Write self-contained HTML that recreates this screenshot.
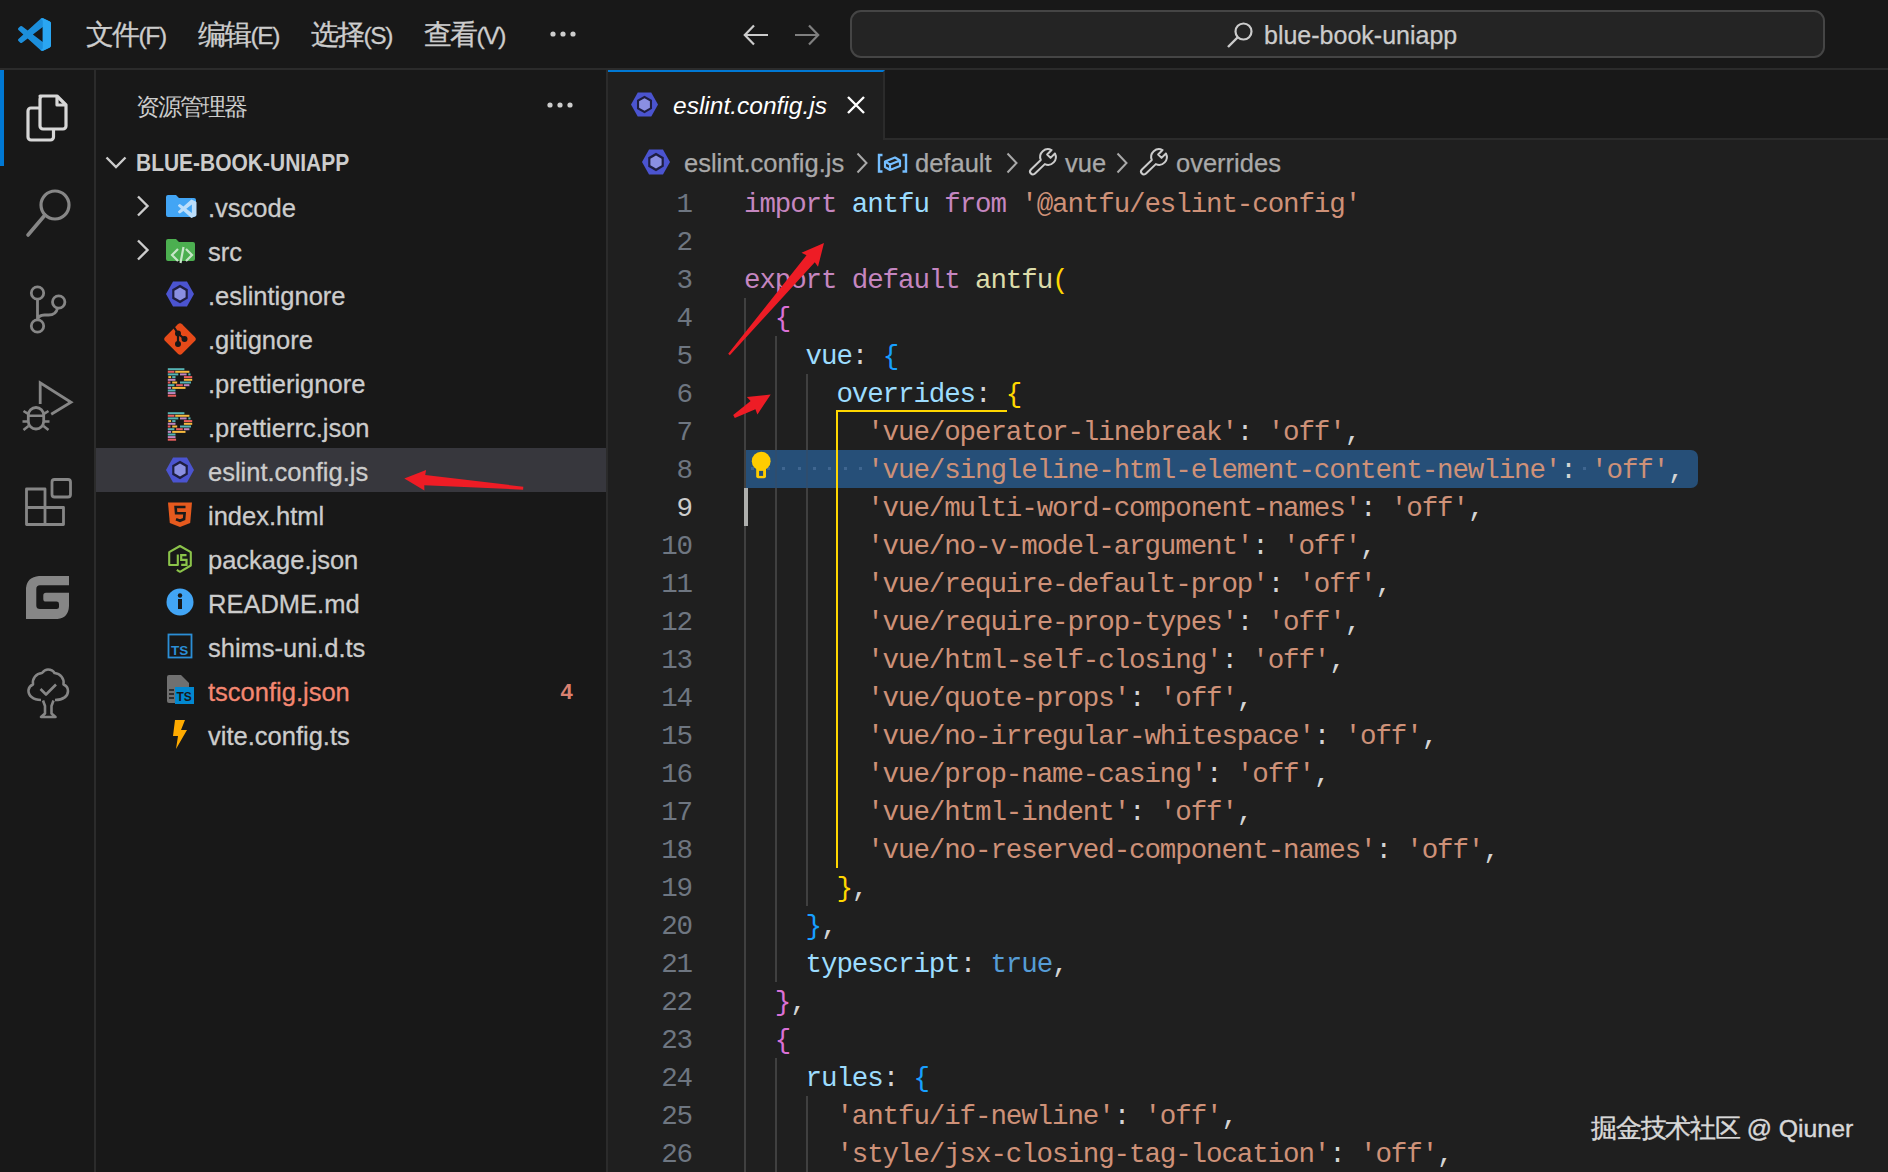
<!DOCTYPE html><html><head><meta charset="utf-8"><style>
*{margin:0;padding:0;box-sizing:border-box}
html,body{width:1888px;height:1172px;overflow:hidden;background:#1f1f1f}
body{position:relative;font-family:"Liberation Sans",sans-serif;color:#cccccc}
.a{position:absolute}
svg{position:absolute;overflow:visible}
#title{left:0;top:0;width:1888px;height:70px;background:#181818;border-bottom:2px solid #2b2b2b}
#act{left:0;top:70px;width:96px;height:1102px;background:#181818;border-right:2px solid #2b2b2b}
#side{left:96px;top:70px;width:512px;height:1102px;background:#181818;border-right:2px solid #2b2b2b}
#tabs{left:608px;top:70px;width:1280px;height:70px;background:#181818;border-bottom:2px solid #2b2b2b}
#tab{left:608px;top:70px;width:277px;height:70px;background:#1f1f1f;border-top:2px solid #0078d4;border-right:2px solid #2b2b2b}
.menu{top:1px;height:68px;line-height:68px;font-size:24.5px;color:#cccccc;white-space:nowrap;-webkit-text-stroke:0.3px currentColor}
.row{left:96px;width:510px;height:44px}
.rt{position:absolute;left:112px;top:2px;height:44px;line-height:44px;font-size:25.5px;color:#cccccc;white-space:nowrap;-webkit-text-stroke:0.3px currentColor}
.ln{left:600px;width:92px;text-align:right;height:38px;line-height:38px;padding-top:2px;font-family:"Liberation Mono",monospace;font-size:27.5px;letter-spacing:-1.1px;color:#6e7681}
.cl{left:744px;height:38px;line-height:38px;padding-top:2px;font-family:"Liberation Mono",monospace;font-size:27.5px;letter-spacing:-1.102px;color:#d4d4d4;white-space:pre}
.k{color:#c586c0}.v{color:#9cdcfe}.f{color:#dcdcaa}.s{color:#ce9178}.b1{color:#ffd700}.b2{color:#da70d6}.b3{color:#179fff}.c{color:#569cd6}
.ig{width:2px;background:#404040}
.bc{top:141px;height:44px;line-height:44px;font-size:25.5px;color:#a9a9a9;white-space:nowrap;-webkit-text-stroke:0.25px currentColor}
</style></head><body>
<div id="title" class="a"></div><div id="act" class="a"></div><div id="side" class="a"></div><div id="tabs" class="a"></div><div id="tab" class="a"></div>
<svg style="left:18px;top:18px" width="33" height="33" viewBox="0 0 100 100"><path fill="#1c8fdc" d="M96.46 10.8L75.86.87a6.22 6.22 0 0 0-7.1 1.2L29.35 38.04 12.17 25.01a4.15 4.15 0 0 0-5.3.24L1.36 30.26a4.16 4.16 0 0 0 0 6.14L16.26 50 1.36 63.6a4.16 4.16 0 0 0 0 6.14l5.51 5a4.15 4.15 0 0 0 5.3.24l17.18-13.03 39.41 35.97a6.22 6.22 0 0 0 7.1 1.2l20.6-9.91A6.25 6.25 0 0 0 100 83.6V16.4a6.25 6.25 0 0 0-3.54-5.6zM75.02 72.7L45.11 50l29.91-22.7v45.4z"/><path fill="#2aa6f2" d="M68.5 2.2L75.86.87l20.6 9.93A6.25 6.25 0 0 1 100 16.4v67.2a6.25 6.25 0 0 1-3.54 5.6l-20.6 9.93-7.36-1.2 6.52-5.5V7.7z"/></svg>
<div class="a menu" style="left:86px"><span style="font-size:27.5px;letter-spacing:-1.7px">文件</span><span style="letter-spacing:-1.4px">(F)</span></div>
<div class="a menu" style="left:198px"><span style="font-size:27.5px;letter-spacing:-1.7px">编辑</span><span style="letter-spacing:-1.4px">(E)</span></div>
<div class="a menu" style="left:311px"><span style="font-size:27.5px;letter-spacing:-1.7px">选择</span><span style="letter-spacing:-1.4px">(S)</span></div>
<div class="a menu" style="left:424px"><span style="font-size:27.5px;letter-spacing:-1.7px">查看</span><span style="letter-spacing:-1.4px">(V)</span></div>
<svg style="left:549.5px;top:31px" width="26" height="6"><circle cx="3" cy="3" r="2.6" fill="#cccccc"/><circle cx="13" cy="3" r="2.6" fill="#cccccc"/><circle cx="23" cy="3" r="2.6" fill="#cccccc"/></svg>
<svg style="left:743px;top:24px" width="26" height="22" viewBox="0 0 26 22"><path d="M11 1.5L1.8 11 11 20.5M2 11H25" fill="none" stroke="#cccccc" stroke-width="2.2"/></svg>
<svg style="left:794px;top:24px" width="26" height="22" viewBox="0 0 26 22"><path d="M15 1.5L24.2 11 15 20.5M24 11H1" fill="none" stroke="#7f7f7f" stroke-width="2.2"/></svg>
<div class="a" style="left:850px;top:10px;width:975px;height:48px;border-radius:11px;border:2px solid #454545;background:#242424"></div>
<svg style="left:1226px;top:21px" width="28" height="28" viewBox="0 0 28 28"><circle cx="17.5" cy="10.5" r="8" fill="none" stroke="#cccccc" stroke-width="2.2"/><path d="M12 16L2 26" stroke="#cccccc" stroke-width="2.4"/></svg>
<div class="a" style="left:1264px;top:12px;height:46px;line-height:46px;font-size:25px;color:#cccccc;-webkit-text-stroke:0.25px #cccccc">blue-book-uniapp</div>
<div class="a" style="left:0;top:70px;width:4px;height:96px;background:#0078d4"></div>
<svg style="left:24px;top:92px" width="48" height="52" viewBox="0 0 48 52"><path d="M16 4h17l9 9v21a3 3 0 0 1-3 3H19a3 3 0 0 1-3-3V7a3 3 0 0 1 3-3z" fill="none" stroke="#d7d7d7" stroke-width="3.2" stroke-linejoin="round"/><path d="M33 4v9h9" fill="none" stroke="#d7d7d7" stroke-width="3.2" stroke-linejoin="round"/><path d="M16 16h-9a3 3 0 0 0-3 3v26a3 3 0 0 0 3 3h19.5a3 3 0 0 0 3-3v-9" fill="none" stroke="#d7d7d7" stroke-width="3.2" stroke-linejoin="round"/></svg>
<svg style="left:24px;top:188px" width="50" height="52" viewBox="0 0 50 52"><circle cx="31" cy="17" r="14" fill="none" stroke="#868686" stroke-width="3.2"/><path d="M21 27L4 47" stroke="#868686" stroke-width="3.6" stroke-linecap="round"/></svg>
<svg style="left:26px;top:284px" width="44" height="54" viewBox="0 0 44 54"><circle cx="11.5" cy="9" r="6.2" fill="none" stroke="#868686" stroke-width="2.8"/><circle cx="11.5" cy="42" r="6.2" fill="none" stroke="#868686" stroke-width="2.8"/><circle cx="32.7" cy="18" r="6.2" fill="none" stroke="#868686" stroke-width="2.8"/><path d="M11.5 15.2v20.6M31.5 24.2c-1 5-4 6.8-9 6.8h-4c-4 0-6.5 1.5-6.8 4.8" fill="none" stroke="#868686" stroke-width="2.8"/></svg>
<svg style="left:22px;top:380px" width="52" height="54" viewBox="0 0 52 54"><path d="M18.2 24V2.8L49 22.2 29.2 34.2" fill="none" stroke="#868686" stroke-width="2.8" stroke-linejoin="miter"/><rect x="6.3" y="27.5" width="15.4" height="21.5" rx="7.7" fill="none" stroke="#868686" stroke-width="2.8"/><path d="M6.5 35.7h15M1.5 31l5 3.2M26.5 31l-5 3.2M0.5 41.5h6M21.5 41.5h6M1.5 50l5-4M26.5 50l-5-4" fill="none" stroke="#868686" stroke-width="2.6"/></svg>
<svg style="left:22px;top:476px" width="52" height="52" viewBox="0 0 52 52"><path d="M4.5 13h18.5v18.5h18.5v17H4.5z M4.5 31.5h18.5 M23 31.5v17" fill="none" stroke="#868686" stroke-width="2.8" stroke-linejoin="round"/><rect x="30" y="3.5" width="18.5" height="17.5" rx="2.5" fill="none" stroke="#868686" stroke-width="2.8"/></svg>
<svg style="left:26px;top:576px" width="44" height="44" viewBox="0 0 44 44"><path d="M0 12Q1 1 13 0H43V9.3H14Q10.3 9.3 10.3 13V29.5Q10.3 33 14 33H30.5Q33 33 33 30.5V28Q33 25.6 30.5 25.6H20Q17.3 25.6 17.3 23V19.5Q17.3 16.7 20 16.7H43V30Q42.5 42 31.5 43H0Z" fill="#868686"/></svg>
<svg style="left:25px;top:668px" width="46" height="52" viewBox="0 0 46 52"><path d="M16 32C8 32 3 27.5 3.5 22C4 19 5.5 17.5 8 16.5C7 10.5 11 5.5 17 5C19 2.5 21 1.5 23 1.5C25.5 1.5 28 2.5 29.5 5C35.5 5.5 39.5 10.5 38.5 16.5C41 17.5 43 19.5 43 23C43 28 38.5 32 30 32" fill="none" stroke="#868686" stroke-width="2.6" stroke-linejoin="round"/><path d="M18 32.5L20 38V45.5L16 49H30.5L26.5 45.5V38L28.5 32.5M15.5 21l5.5 5.5 10-10" fill="none" stroke="#868686" stroke-width="2.6" stroke-linejoin="round"/></svg>
<div class="a" style="left:135.5px;top:71.5px;height:70px;line-height:70px;font-size:24px;letter-spacing:-2px;color:#cccccc">资源管理器</div>
<svg style="left:547px;top:102px" width="26" height="6"><circle cx="3" cy="3" r="2.6" fill="#cccccc"/><circle cx="13" cy="3" r="2.6" fill="#cccccc"/><circle cx="23" cy="3" r="2.6" fill="#cccccc"/></svg>
<svg style="left:105px;top:156px" width="22" height="13" viewBox="0 0 22 13"><path d="M1.5 1.5L11 11 20.5 1.5" fill="none" stroke="#cccccc" stroke-width="2.4"/></svg>
<div class="a" style="left:136px;top:141px;height:44px;line-height:44px;font-size:23px;font-weight:bold;color:#cccccc;transform:scaleX(0.912);transform-origin:0 0">BLUE-BOOK-UNIAPP</div>
<div class="a row" style="top:184px;">
<div class="rt" style="color:#cccccc">.vscode</div>
</div>
<svg style="left:136px;top:195px" width="14" height="22" viewBox="0 0 14 22"><path d="M2 1.5L11.5 11 2 20.5" fill="none" stroke="#cccccc" stroke-width="2.4"/></svg>
<svg style="left:166px;top:195px" width="31" height="22" viewBox="0 0 31 22"><path d="M0 2a2 2 0 0 1 2-2h8l3 3h15a2 2 0 0 1 2 2v15a2 2 0 0 1-2 2H2a2 2 0 0 1-2-2z" fill="#42a5f5"/><g transform="translate(12,4.5) scale(0.185)"><path fill="#bbdefb" d="M96.46 10.8L75.86.87a6.22 6.22 0 0 0-7.1 1.2L29.35 38.04 12.17 25.01a4.15 4.15 0 0 0-5.3.24L1.36 30.26a4.16 4.16 0 0 0 0 6.14L16.26 50 1.36 63.6a4.16 4.16 0 0 0 0 6.14l5.51 5a4.15 4.15 0 0 0 5.3.24l17.18-13.03 39.41 35.97a6.22 6.22 0 0 0 7.1 1.2l20.6-9.91A6.25 6.25 0 0 0 100 83.6V16.4a6.25 6.25 0 0 0-3.54-5.6zM75.02 72.7L45.11 50l29.91-22.7v45.4z"/></g></svg>
<div class="a row" style="top:228px;">
<div class="rt" style="color:#cccccc">src</div>
</div>
<svg style="left:136px;top:239px" width="14" height="22" viewBox="0 0 14 22"><path d="M2 1.5L11.5 11 2 20.5" fill="none" stroke="#cccccc" stroke-width="2.4"/></svg>
<svg style="left:166px;top:239px" width="31" height="24" viewBox="0 0 31 24"><path d="M0 2a2 2 0 0 1 2-2h8l3 3h14a2 2 0 0 1 2 2v15a2 2 0 0 1-2 2H2a2 2 0 0 1-2-2z" fill="#4caf50"/><path d="M12 10l-6 6 6 6M20 10l6 6-6 6M17.5 8l-3 16" fill="none" stroke="#c8e6c9" stroke-width="2.2"/></svg>
<div class="a row" style="top:272px;">
<div class="rt" style="color:#cccccc">.eslintignore</div>
</div>
<svg style="left:166px;top:280px" width="28" height="28" viewBox="0 0 28 28"><path d="M7 1.5h14l7 12.5-7 12.5H7L0 14z" fill="#4b54d0"/><path d="M14 4.8l7.8 4.5v9.2L14 23.2l-7.8-4.5V9.3z" fill="#1e1e40"/><path d="M14 7.4l5.6 3.25v6.7L14 20.6l-5.6-3.25v-6.7z" fill="#8a8fe2"/></svg>
<div class="a row" style="top:316px;">
<div class="rt" style="color:#cccccc">.gitignore</div>
</div>
<svg style="left:164px;top:323px" width="32" height="30" viewBox="0 0 32 30"><path d="M13.9 1.2a3 3 0 0 1 4.2 0L30.8 13.9a3 3 0 0 1 0 4.2L18.1 30.8a3 3 0 0 1-4.2 0L1.2 18.1a3 3 0 0 1 0-4.2z" fill="#e64a19"/><circle cx="14" cy="10.5" r="3" fill="#181818"/><circle cx="14" cy="21" r="3" fill="#181818"/><circle cx="20.5" cy="16" r="3" fill="#181818"/><path d="M9.5 3.5l4.5 7M14 10.5v10.5M14 10.5l6.5 5.5" stroke="#181818" stroke-width="2.2"/></svg>
<div class="a row" style="top:360px;">
<div class="rt" style="color:#cccccc">.prettierignore</div>
</div>
<svg style="left:166px;top:368px" width="28" height="30" viewBox="0 0 28 30"><rect x="1.8" y="0.19999999999999996" width="16.6" height="2" fill="#56b3b4"/><rect x="1.8" y="2.8" width="6.6" height="2" fill="#ea5e5e"/><rect x="9.2" y="2.8" width="14.2" height="2" fill="#f7b93e"/><rect x="1.8" y="5.4" width="10.5" height="2" fill="#56b3b4"/><rect x="14" y="5.4" width="6.6" height="2" fill="#bf85bf"/><rect x="22.3" y="5.4" width="2.2" height="2" fill="#56b3b4"/><rect x="2.3" y="8.1" width="2.8" height="2" fill="#f7b93e"/><rect x="6.2" y="8.1" width="3.3" height="2" fill="#56b3b4"/><rect x="17.9" y="8.1" width="8.3" height="2" fill="#ea5e5e"/><rect x="1.8" y="10.8" width="7.7" height="2" fill="#bf85bf"/><rect x="17.9" y="10.8" width="8.3" height="2" fill="#f7b93e"/><rect x="1.8" y="13.5" width="2.7" height="2" fill="#ea5e5e"/><rect x="6.2" y="13.5" width="5.0" height="2" fill="#f7b93e"/><rect x="14" y="13.5" width="11.0" height="2" fill="#56b3b4"/><rect x="1.8" y="16.2" width="6.6" height="2" fill="#56b3b4"/><rect x="10.1" y="16.2" width="6.7" height="2" fill="#ea5e5e"/><rect x="17.9" y="16.2" width="5.5" height="2" fill="#bf85bf"/><rect x="1.8" y="18.9" width="3.3" height="2" fill="#bf85bf"/><rect x="6.2" y="18.9" width="13.3" height="2" fill="#f7b93e"/><rect x="1.8" y="21.5" width="7.7" height="2" fill="#56b3b4"/><rect x="1.8" y="24.1" width="7.7" height="2" fill="#bf85bf"/><rect x="1.8" y="26.7" width="8.3" height="2" fill="#ea5e5e"/></svg>
<div class="a row" style="top:404px;">
<div class="rt" style="color:#cccccc">.prettierrc.json</div>
</div>
<svg style="left:166px;top:412px" width="28" height="30" viewBox="0 0 28 30"><rect x="1.8" y="0.19999999999999996" width="16.6" height="2" fill="#56b3b4"/><rect x="1.8" y="2.8" width="6.6" height="2" fill="#ea5e5e"/><rect x="9.2" y="2.8" width="14.2" height="2" fill="#f7b93e"/><rect x="1.8" y="5.4" width="10.5" height="2" fill="#56b3b4"/><rect x="14" y="5.4" width="6.6" height="2" fill="#bf85bf"/><rect x="22.3" y="5.4" width="2.2" height="2" fill="#56b3b4"/><rect x="2.3" y="8.1" width="2.8" height="2" fill="#f7b93e"/><rect x="6.2" y="8.1" width="3.3" height="2" fill="#56b3b4"/><rect x="17.9" y="8.1" width="8.3" height="2" fill="#ea5e5e"/><rect x="1.8" y="10.8" width="7.7" height="2" fill="#bf85bf"/><rect x="17.9" y="10.8" width="8.3" height="2" fill="#f7b93e"/><rect x="1.8" y="13.5" width="2.7" height="2" fill="#ea5e5e"/><rect x="6.2" y="13.5" width="5.0" height="2" fill="#f7b93e"/><rect x="14" y="13.5" width="11.0" height="2" fill="#56b3b4"/><rect x="1.8" y="16.2" width="6.6" height="2" fill="#56b3b4"/><rect x="10.1" y="16.2" width="6.7" height="2" fill="#ea5e5e"/><rect x="17.9" y="16.2" width="5.5" height="2" fill="#bf85bf"/><rect x="1.8" y="18.9" width="3.3" height="2" fill="#bf85bf"/><rect x="6.2" y="18.9" width="13.3" height="2" fill="#f7b93e"/><rect x="1.8" y="21.5" width="7.7" height="2" fill="#56b3b4"/><rect x="1.8" y="24.1" width="7.7" height="2" fill="#bf85bf"/><rect x="1.8" y="26.7" width="8.3" height="2" fill="#ea5e5e"/></svg>
<div class="a row" style="top:448px;background:#37373d;">
<div class="rt" style="color:#cccccc">eslint.config.js</div>
</div>
<svg style="left:166px;top:456px" width="28" height="28" viewBox="0 0 28 28"><path d="M7 1.5h14l7 12.5-7 12.5H7L0 14z" fill="#4b54d0"/><path d="M14 4.8l7.8 4.5v9.2L14 23.2l-7.8-4.5V9.3z" fill="#1e1e40"/><path d="M14 7.4l5.6 3.25v6.7L14 20.6l-5.6-3.25v-6.7z" fill="#8a8fe2"/></svg>
<div class="a row" style="top:492px;">
<div class="rt" style="color:#cccccc">index.html</div>
</div>
<svg style="left:167px;top:501px" width="26" height="28" viewBox="0 0 26 28"><path d="M1 1.5h24l-1.8 20.5L13 26 2.8 22z" fill="#e65a1e"/><path d="M18.5 6H8.6l.5 6.3h8.5l-.5 5.7L13 19.8l-4-1.6" fill="none" stroke="#1a1a1a" stroke-width="2.6"/></svg>
<div class="a row" style="top:536px;">
<div class="rt" style="color:#cccccc">package.json</div>
</div>
<svg style="left:166px;top:544px" width="28" height="30" viewBox="0 0 28 30"><path d="M11.8 10.5v10.5H3.2V8.2L14 2l10.8 6.2v13.3L14 27.8l-3.2-1.9" fill="none" stroke="#8bc34a" stroke-width="2.1" stroke-linejoin="round"/><path d="M20.5 11.2h-5.3v4.6h5.3v5h-5.3" fill="none" stroke="#8bc34a" stroke-width="2.2"/></svg>
<div class="a row" style="top:580px;">
<div class="rt" style="color:#cccccc">README.md</div>
</div>
<svg style="left:166px;top:588px" width="28" height="28" viewBox="0 0 28 28"><circle cx="14" cy="14" r="13.5" fill="#42a5f5"/><rect x="12" y="11" width="4" height="10" fill="#181818"/><circle cx="14" cy="7.5" r="2.2" fill="#181818"/></svg>
<div class="a row" style="top:624px;">
<div class="rt" style="color:#cccccc">shims-uni.d.ts</div>
</div>
<svg style="left:166px;top:633px" width="28" height="28" viewBox="0 0 28 28"><rect x="2.5" y="1.5" width="23" height="23" fill="none" stroke="#2b8ed6" stroke-width="1.8"/><text x="5" y="21.5" font-family="Liberation Sans" font-weight="bold" font-size="13.5" fill="#2b8ed6">TS</text></svg>
<div class="a row" style="top:668px;">
<div class="rt" style="color:#f48771">tsconfig.json</div>
</div>
<svg style="left:166px;top:675px" width="30" height="30" viewBox="0 0 30 30"><path d="M1 2a2 2 0 0 1 2-2h12l8 8v20H3a2 2 0 0 1-2-2z" fill="#707070"/><path d="M3 15h5M3 19h5M3 23h5" stroke="#181818" stroke-width="1.6"/><rect x="9" y="12" width="19" height="17" fill="#0288d1"/><text x="10.5" y="26" font-family="Liberation Sans" font-weight="bold" font-size="12" fill="#181818">TS</text></svg>
<div class="a row" style="top:712px;">
<div class="rt" style="color:#cccccc">vite.config.ts</div>
</div>
<svg style="left:170px;top:720px" width="20" height="30" viewBox="0 0 20 30"><path d="M5 0h10l-4 10h6L6 29l2-13H3z" fill="#ffab00"/></svg>
<div class="a" style="left:560.5px;top:670px;height:44px;line-height:44px;font-size:22px;font-weight:bold;color:#d98070">4</div>
<svg style="left:631px;top:91px" width="27" height="27" viewBox="0 0 28 28"><path d="M7 1.5h14l7 12.5-7 12.5H7L0 14z" fill="#4b54d0"/><path d="M14 4.8l7.8 4.5v9.2L14 23.2l-7.8-4.5V9.3z" fill="#1e1e40"/><path d="M14 7.4l5.6 3.25v6.7L14 20.6l-5.6-3.25v-6.7z" fill="#8a8fe2"/></svg>
<div class="a" style="left:673px;top:72px;height:68px;line-height:68px;font-size:24.5px;font-style:italic;color:#ffffff">eslint.config.js</div>
<svg style="left:847px;top:96px" width="18" height="18" viewBox="0 0 18 18"><path d="M1 1L17 17M17 1L1 17" stroke="#ffffff" stroke-width="2.4"/></svg>
<svg style="left:642px;top:148px" width="28" height="28" viewBox="0 0 28 28"><path d="M7 1.5h14l7 12.5-7 12.5H7L0 14z" fill="#4b54d0"/><path d="M14 4.8l7.8 4.5v9.2L14 23.2l-7.8-4.5V9.3z" fill="#1e1e40"/><path d="M14 7.4l5.6 3.25v6.7L14 20.6l-5.6-3.25v-6.7z" fill="#8a8fe2"/></svg>
<div class="a bc" style="left:684px">eslint.config.js</div>
<svg style="left:856px;top:152px" width="12" height="22" viewBox="0 0 12 22"><path d="M1.5 1.5L10.5 11 1.5 20.5" fill="none" stroke="#a9a9a9" stroke-width="2"/></svg>
<svg style="left:877px;top:152px" width="31" height="22" viewBox="0 0 31 22"><path d="M5.5 3H2v16.5h3.5M25.5 3H29v16.5h-3.5" fill="none" stroke="#75beff" stroke-width="2.4"/><path d="M8 9.5l10-4 5 3v5.5l-10 4-5-3z M8 9.5l5 3 10-4 M13 12.5v5.5" fill="none" stroke="#75beff" stroke-width="2.2" stroke-linejoin="round"/></svg>
<div class="a bc" style="left:915px">default</div>
<svg style="left:1006px;top:152px" width="12" height="22" viewBox="0 0 12 22"><path d="M1.5 1.5L10.5 11 1.5 20.5" fill="none" stroke="#a9a9a9" stroke-width="2"/></svg>
<svg style="left:1028px;top:147px" width="30" height="30" viewBox="0 0 30 30"><path d="M19.15 7.45L23.55 3.06A7.8 7.8 0 0 0 12.78 12.95L2.98 22.41A2.9 2.9 0 0 0 7.02 26.59L16.81 17.12A7.8 7.8 0 0 0 26.94 6.45L22.55 10.85Z" fill="none" stroke="#cccccc" stroke-width="2" stroke-linejoin="round"/></svg>
<div class="a bc" style="left:1065px">vue</div>
<svg style="left:1116px;top:152px" width="12" height="22" viewBox="0 0 12 22"><path d="M1.5 1.5L10.5 11 1.5 20.5" fill="none" stroke="#a9a9a9" stroke-width="2"/></svg>
<svg style="left:1139px;top:147px" width="30" height="30" viewBox="0 0 30 30"><path d="M19.15 7.45L23.55 3.06A7.8 7.8 0 0 0 12.78 12.95L2.98 22.41A2.9 2.9 0 0 0 7.02 26.59L16.81 17.12A7.8 7.8 0 0 0 26.94 6.45L22.55 10.85Z" fill="none" stroke="#cccccc" stroke-width="2" stroke-linejoin="round"/></svg>
<div class="a bc" style="left:1176px">overrides</div>
<div class="a" style="left:745px;top:450px;width:953px;height:38px;background:#264f78;border-radius:0 7px 7px 0"></div>
<div class="a ig" style="left:744px;top:298px;height:874px"></div>
<div class="a ig" style="left:775px;top:336px;height:646px"></div>
<div class="a ig" style="left:775px;top:1058px;height:114px"></div>
<div class="a ig" style="left:806px;top:374px;height:532px"></div>
<div class="a ig" style="left:806px;top:1096px;height:76px"></div>
<div class="a" style="left:775px;top:450px;width:2px;height:38px;background:#2e4d6e"></div>
<div class="a" style="left:806px;top:450px;width:2px;height:38px;background:#2e4d6e"></div>
<div class="a" style="left:836px;top:410px;width:2px;height:458px;background:#ffd700"></div>
<div class="a" style="left:836px;top:410px;width:171px;height:2px;background:#ffd700"></div>
<div class="a" style="left:744px;top:488px;width:4px;height:38px;background:#aeafad"></div>
<div class="a ln" style="top:184px;">1</div>
<div class="a cl" style="top:184px"><span class="k">import</span> <span class="v">antfu</span> <span class="k">from</span> <span class="s">'@antfu/eslint-config'</span></div>
<div class="a ln" style="top:222px;">2</div>
<div class="a cl" style="top:222px"></div>
<div class="a ln" style="top:260px;">3</div>
<div class="a cl" style="top:260px"><span class="k">export</span> <span class="k">default</span> <span class="f">antfu</span><span class="b1">(</span></div>
<div class="a ln" style="top:298px;">4</div>
<div class="a cl" style="top:298px">  <span class="b2">{</span></div>
<div class="a ln" style="top:336px;">5</div>
<div class="a cl" style="top:336px">    <span class="v">vue</span>: <span class="b3">{</span></div>
<div class="a ln" style="top:374px;">6</div>
<div class="a cl" style="top:374px">      <span class="v">overrides</span>: <span class="b1">{</span></div>
<div class="a ln" style="top:412px;">7</div>
<div class="a cl" style="top:412px">        <span class="s">'vue/operator-linebreak'</span>: <span class="s">'off'</span>,</div>
<div class="a ln" style="top:450px;">8</div>
<div class="a cl" style="top:450px">        <span class="s">'vue/singleline-html-element-content-newline'</span>: <span class="s">'off'</span>,</div>
<div class="a ln" style="top:488px;color:#cccccc;">9</div>
<div class="a cl" style="top:488px">        <span class="s">'vue/multi-word-component-names'</span>: <span class="s">'off'</span>,</div>
<div class="a ln" style="top:526px;">10</div>
<div class="a cl" style="top:526px">        <span class="s">'vue/no-v-model-argument'</span>: <span class="s">'off'</span>,</div>
<div class="a ln" style="top:564px;">11</div>
<div class="a cl" style="top:564px">        <span class="s">'vue/require-default-prop'</span>: <span class="s">'off'</span>,</div>
<div class="a ln" style="top:602px;">12</div>
<div class="a cl" style="top:602px">        <span class="s">'vue/require-prop-types'</span>: <span class="s">'off'</span>,</div>
<div class="a ln" style="top:640px;">13</div>
<div class="a cl" style="top:640px">        <span class="s">'vue/html-self-closing'</span>: <span class="s">'off'</span>,</div>
<div class="a ln" style="top:678px;">14</div>
<div class="a cl" style="top:678px">        <span class="s">'vue/quote-props'</span>: <span class="s">'off'</span>,</div>
<div class="a ln" style="top:716px;">15</div>
<div class="a cl" style="top:716px">        <span class="s">'vue/no-irregular-whitespace'</span>: <span class="s">'off'</span>,</div>
<div class="a ln" style="top:754px;">16</div>
<div class="a cl" style="top:754px">        <span class="s">'vue/prop-name-casing'</span>: <span class="s">'off'</span>,</div>
<div class="a ln" style="top:792px;">17</div>
<div class="a cl" style="top:792px">        <span class="s">'vue/html-indent'</span>: <span class="s">'off'</span>,</div>
<div class="a ln" style="top:830px;">18</div>
<div class="a cl" style="top:830px">        <span class="s">'vue/no-reserved-component-names'</span>: <span class="s">'off'</span>,</div>
<div class="a ln" style="top:868px;">19</div>
<div class="a cl" style="top:868px">      <span class="b1">}</span>,</div>
<div class="a ln" style="top:906px;">20</div>
<div class="a cl" style="top:906px">    <span class="b3">}</span>,</div>
<div class="a ln" style="top:944px;">21</div>
<div class="a cl" style="top:944px">    <span class="v">typescript</span>: <span class="c">true</span>,</div>
<div class="a ln" style="top:982px;">22</div>
<div class="a cl" style="top:982px">  <span class="b2">}</span>,</div>
<div class="a ln" style="top:1020px;">23</div>
<div class="a cl" style="top:1020px">  <span class="b2">{</span></div>
<div class="a ln" style="top:1058px;">24</div>
<div class="a cl" style="top:1058px">    <span class="v">rules</span>: <span class="b3">{</span></div>
<div class="a ln" style="top:1096px;">25</div>
<div class="a cl" style="top:1096px">      <span class="s">'antfu/if-newline'</span>: <span class="s">'off'</span>,</div>
<div class="a ln" style="top:1134px;">26</div>
<div class="a cl" style="top:1134px">      <span class="s">'style/jsx-closing-tag-location'</span>: <span class="s">'off'</span>,</div>
<div class="a" style="left:751.3px;top:467px;width:3px;height:3px;background:#3f6690"></div>
<div class="a" style="left:766.7px;top:467px;width:3px;height:3px;background:#3f6690"></div>
<div class="a" style="left:782.1px;top:467px;width:3px;height:3px;background:#3f6690"></div>
<div class="a" style="left:797.5px;top:467px;width:3px;height:3px;background:#3f6690"></div>
<div class="a" style="left:812.9px;top:467px;width:3px;height:3px;background:#3f6690"></div>
<div class="a" style="left:828.3px;top:467px;width:3px;height:3px;background:#3f6690"></div>
<div class="a" style="left:843.7px;top:467px;width:3px;height:3px;background:#3f6690"></div>
<div class="a" style="left:859.1px;top:467px;width:3px;height:3px;background:#3f6690"></div>
<div class="a" style="left:1582.9px;top:467px;width:3px;height:3px;background:#3f6690"></div>
<svg style="left:750px;top:450px" width="24" height="38" viewBox="0 0 24 38"><circle cx="11.2" cy="11.2" r="9.4" fill="#ffcc00"/><path d="M6.2 16h9.8v10.2a2 2 0 0 1-2 2H8.2a2 2 0 0 1-2-2z" fill="#ffcc00"/><rect x="9.1" y="20.9" width="4" height="5" fill="#264f78"/></svg>
<svg style="left:0;top:0" width="1888" height="1172">
<polygon points="729.8,355.2 814.8,262.2 818.0,266.8 824.0,243.0 801.5,252.7 806.5,255.2 728.2,353.8" fill="#ee1c25"/>
<polygon points="734.8,417.9 755.4,409.2 757.4,414.4 770.7,394.6 746.9,396.9 750.6,401.1 733.2,415.1" fill="#ee1c25"/>
<polygon points="523.3,486.7 425.2,475.0 426.1,470.0 404.3,478.5 424.4,490.4 424.3,485.3 523.1,489.7" fill="#ee1c25"/>
</svg>
<div class="a" style="left:1591px;top:1105.5px;height:44px;line-height:44px;font-size:24.8px;color:#d8d8d8;-webkit-text-stroke:0.4px #d8d8d8;white-space:nowrap"><span style="font-size:25.8px;letter-spacing:-1.2px">掘金技术社区</span> @ Qiuner</div>
</body></html>
